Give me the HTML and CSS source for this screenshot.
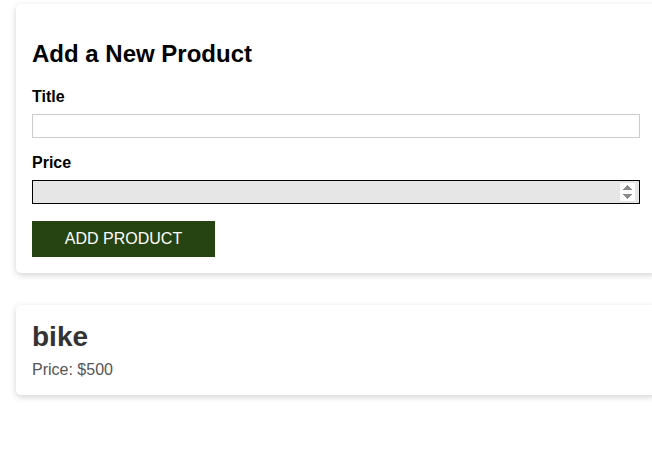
FILE: index.html
```html
<!DOCTYPE html>
<html lang="en">
<head>
<meta charset="utf-8">
<title>Products</title>
<link rel="stylesheet" href="styles.css">
</head>
<body>
<main class="page">
  <section class="card">
    <h2 class="form-title">Add a New Product</h2>
    <form class="product-form" onsubmit="return false">
      <label class="field-label" for="title">Title</label>
      <input class="field-input" id="title" type="text">
      <label class="field-label" for="price">Price</label>
      <input class="field-input" id="price" type="number" autofocus>
      <button class="submit-btn" type="submit">ADD PRODUCT</button>
    </form>
  </section>
  <section class="card product">
    <h3 class="product-name">bike</h3>
    <p class="product-price">Price: $500</p>
  </section>
</main>
</body>
</html>
```
FILE: styles.css
```css
html, body {
  margin: 0;
  padding: 0;
  background: #ffffff;
}

html {
  overflow: hidden;
}

body {
  min-height: 100vh;
  font-family: "Liberation Sans", Arial, sans-serif;
  font-size: 16px;
  color: #000;
}

.page {
  padding: 4px 0 40px 16px;
  display: flex;
  flex-direction: column;
  gap: 32px;
}

.card {
  box-sizing: border-box;
  width: 640px;
  flex-shrink: 0;
  padding: 16px;
  background: #fff;
  border-radius: 5px;
  box-shadow: 0 2px 6px rgba(0, 0, 0, 0.18);
}

.form-title {
  margin: 20px 0;
  font-size: 24px;
  font-weight: bold;
}

.product-form {
  display: flex;
  flex-direction: column;
  align-items: flex-start;
}

.field-label {
  display: block;
  font-weight: bold;
  font-size: 16px;
  margin-bottom: 8px;
}

.field-input {
  box-sizing: border-box;
  width: 100%;
  height: 24px;
  margin: 0 0 16px;
  padding: 2px 4px;
  border: 1px solid #cccccc;
  border-radius: 0;
  font-family: inherit;
  font-size: 16px;
  background: #fff;
}

.field-input:focus {
  outline: none;
  border-color: #000;
  background: #e6e6e6;
}

.submit-btn {
  margin-top: 1px;
  width: 183px;
  height: 36px;
  border: none;
  border-radius: 0;
  background: #254412;
  color: #ffffff;
  font-family: inherit;
  font-size: 16px;
  cursor: pointer;
}

.product-name {
  margin: 0 0 8px;
  font-size: 28px;
  font-weight: bold;
  color: #333;
}

.product-price {
  margin: 0;
  font-size: 16px;
  color: #555;
}
```
